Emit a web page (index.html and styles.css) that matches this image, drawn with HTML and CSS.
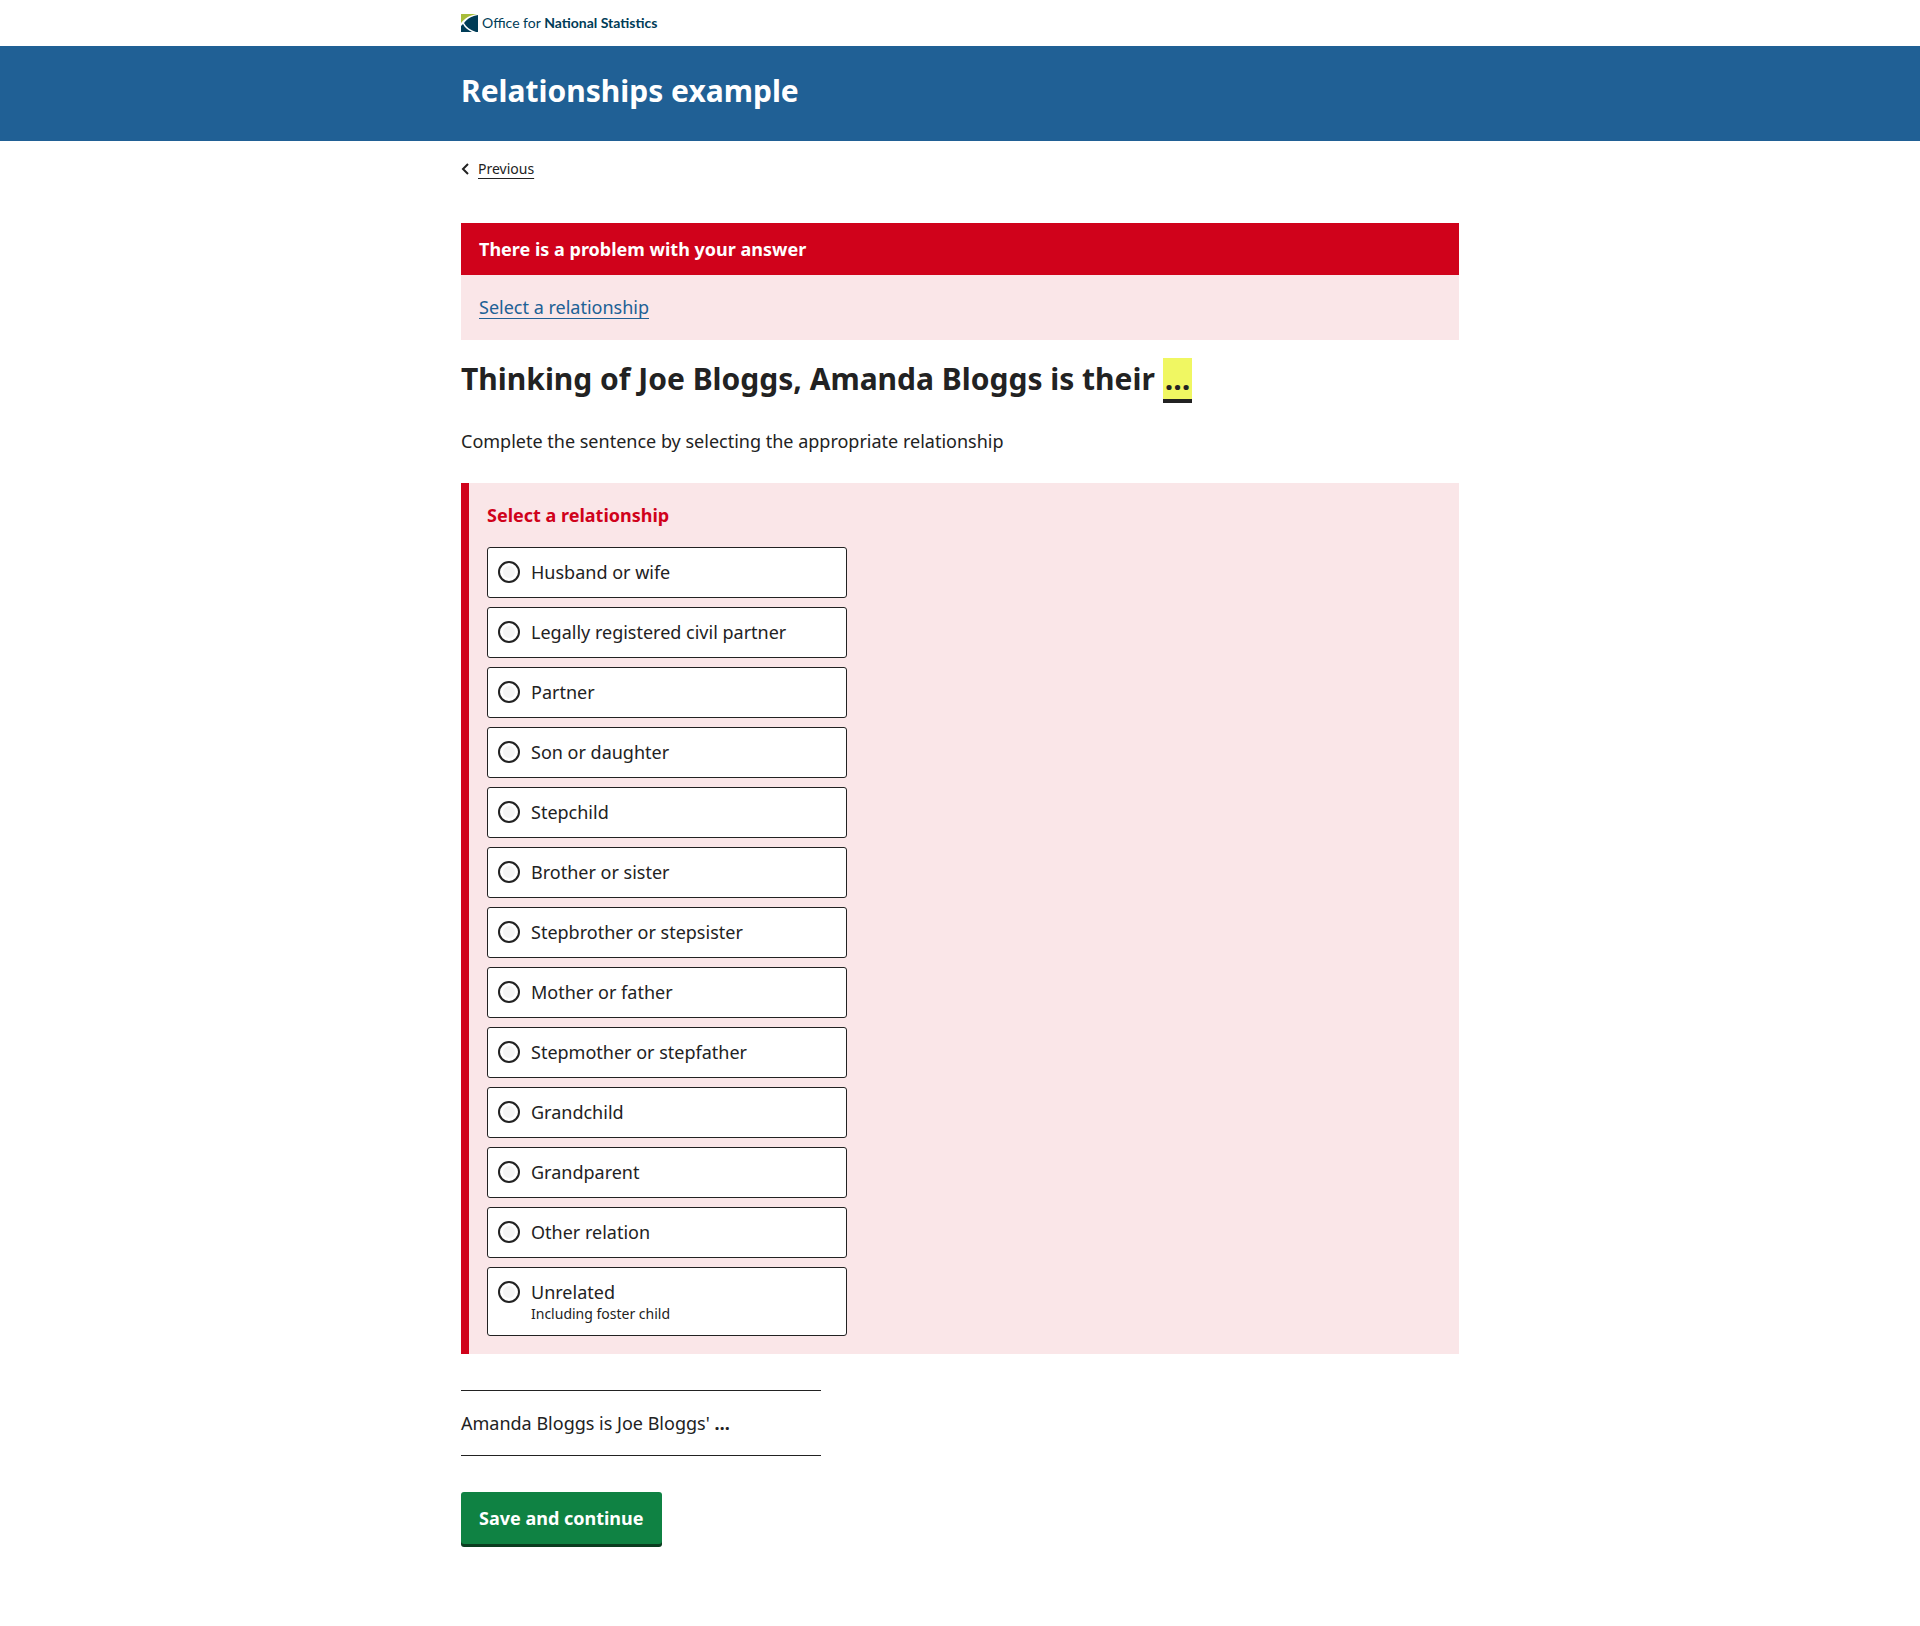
FILE: index.html
```html
<!DOCTYPE html>
<html lang="en">
<head>
<meta charset="utf-8">
<meta name="viewport" content="width=device-width, initial-scale=1">
<title>Relationships example</title>
<link rel="stylesheet" href="styles.css">
</head>
<body>
<header>
  <div class="container masthead">
    <a class="logo" href="#">
      <svg class="logo-mark" viewBox="0 0 17 18" aria-hidden="true">
        <path d="M0 0H16C9 1 4 4 0 9Z" fill="#a8bd3a"/>
        <path d="M17 1V18H15C9 16 5 13 3 9C7 4 11 2 17 1Z" fill="#003c57"/>
        <path d="M0 18V12L2 10C4 14 7 16 11 18Z" fill="#003c57"/>
      </svg>
      <span class="logo-text">Office for <b>National Statistics</b></span>
    </a>
  </div>
  <div class="banner">
    <div class="container"><p class="banner-title">Relationships example</p></div>
  </div>
</header>
<div class="container">
  <nav class="previous" aria-label="Back">
    <svg class="chevron" viewBox="0 0 8 12" aria-hidden="true"><path d="M7 1L2 6L7 11" fill="none" stroke="#222" stroke-width="2"/></svg>
    <a class="previous-link" href="#">Previous</a>
  </nav>
  <main>
    <section class="error-summary" aria-labelledby="error-title">
      <h2 class="error-title" id="error-title">There is a problem with your answer</h2>
      <div class="error-body"><a class="error-link" href="#answers">Select a relationship</a></div>
    </section>
    <form>
      <h1 class="question">Thinking of Joe Bloggs, Amanda Bloggs is their <mark class="highlight">…</mark></h1>
      <p class="description">Complete the sentence by selecting the appropriate relationship</p>
      <div class="error-panel" id="answers" role="radiogroup" aria-labelledby="answer-error">
        <p class="error-message" id="answer-error">Select a relationship</p>
        <div class="options">
          <label class="option"><input class="radio" type="radio" name="relationship"><span>Husband or wife</span></label>
          <label class="option"><input class="radio" type="radio" name="relationship"><span>Legally registered civil partner</span></label>
          <label class="option"><input class="radio" type="radio" name="relationship"><span>Partner</span></label>
          <label class="option"><input class="radio" type="radio" name="relationship"><span>Son or daughter</span></label>
          <label class="option"><input class="radio" type="radio" name="relationship"><span>Stepchild</span></label>
          <label class="option"><input class="radio" type="radio" name="relationship"><span>Brother or sister</span></label>
          <label class="option"><input class="radio" type="radio" name="relationship"><span>Stepbrother or stepsister</span></label>
          <label class="option"><input class="radio" type="radio" name="relationship"><span>Mother or father</span></label>
          <label class="option"><input class="radio" type="radio" name="relationship"><span>Stepmother or stepfather</span></label>
          <label class="option"><input class="radio" type="radio" name="relationship"><span>Grandchild</span></label>
          <label class="option"><input class="radio" type="radio" name="relationship"><span>Grandparent</span></label>
          <label class="option"><input class="radio" type="radio" name="relationship"><span>Other relation</span></label>
          <label class="option"><input class="radio" type="radio" name="relationship"><span>Unrelated<small class="hint">Including foster child</small></span></label>
        </div>
      </div>
      <p class="playback">Amanda Bloggs is Joe Bloggs' <strong>…</strong></p>
      <button class="button" type="button">Save and continue</button>
    </form>
  </main>
</div>
</body>
</html>
```
FILE: styles.css
```css
* {
  box-sizing: border-box;
}

body {
  margin: 0;
  background: #fff;
  color: #222;
  font-family: "Noto Sans", sans-serif;
  font-size: 18px;
  line-height: 26px;
  text-rendering: optimizeSpeed;
}

h1, h2, p {
  margin: 0;
}

.container {
  max-width: 1034px;
  margin: 0 auto;
  padding: 0 18px;
}

/* Header */
.masthead {
  display: flex;
  align-items: center;
  height: 46px;
}

.logo {
  display: flex;
  align-items: center;
  gap: 4px;
  color: #003c57;
  text-decoration: none;
}

.logo-mark {
  width: 17px;
  height: 18px;
}

.logo-text {
  font-family: Lato, sans-serif;
  font-size: 14px;
  line-height: 18px;
  text-rendering: auto;
}

.banner {
  padding: 24px 0 29px;
  background: #206095;
  color: #fff;
}

.banner-title,
.question {
  font-size: 30px;
  font-weight: 700;
  line-height: 42px;
}

/* Back link */
.previous {
  display: flex;
  align-items: center;
  gap: 9px;
  padding: 15px 0 41px;
  font-size: 14px;
}

.chevron {
  width: 8px;
  height: 12px;
}

.previous-link,
.error-link {
  color: #222;
  text-decoration: underline 1px;
  text-decoration-skip-ink: none;
  text-underline-offset: 4px;
}

.error-link {
  color: #206095;
}

/* Error summary */
.error-summary {
  margin-bottom: 18px;
  background: #fae6e8;
}

.error-title {
  padding: 13px 18px;
  background: #d0021b;
  color: #fff;
  font-size: 18px;
  line-height: 26px;
}

.error-body {
  padding: 19px 18px 20px;
}

/* Question */
.highlight {
  padding: 0 2px;
  border-bottom: 4px solid #222;
  background: #f0f762;
  color: inherit;
}

.description {
  margin: 28px 0 29px;
}

.error-panel {
  padding: 18px;
  border-left: 8px solid #d0021b;
  background: #fae6e8;
}

.error-message {
  margin-bottom: 18px;
  color: #d0021b;
  font-weight: 700;
  line-height: 28px;
}

.options {
  display: flex;
  flex-direction: column;
  gap: 9px;
  max-width: 360px;
}

.option {
  display: flex;
  align-items: flex-start;
  gap: 11px;
  padding: 12px 10px;
  border: 1px solid #222;
  border-radius: 3px;
  background: #fff;
  line-height: 25px;
}

.radio {
  flex: none;
  appearance: none;
  width: 22px;
  height: 22px;
  margin: 1px 0 0;
  padding: 3px;
  border: 2px solid #222;
  border-radius: 50%;
  background: #f5f5f5 content-box;
}

.radio:checked {
  background-color: #222;
}

.hint {
  display: block;
  font-size: 14px;
  line-height: 18px;
}

/* Answer playback and submit */
.playback {
  max-width: 360px;
  margin: 36px 0;
  padding: 19px 0;
  border: solid #222;
  border-width: 1px 0;
}

.button {
  display: block;
  margin: 0 0 82px;
  padding: 13px 18px;
  border: 0;
  border-radius: 3px;
  background: #0f8243;
  box-shadow: 0 3px 0 #0b3d20;
  color: #fff;
  font: 700 18px/26px "Noto Sans", sans-serif;
}
```
